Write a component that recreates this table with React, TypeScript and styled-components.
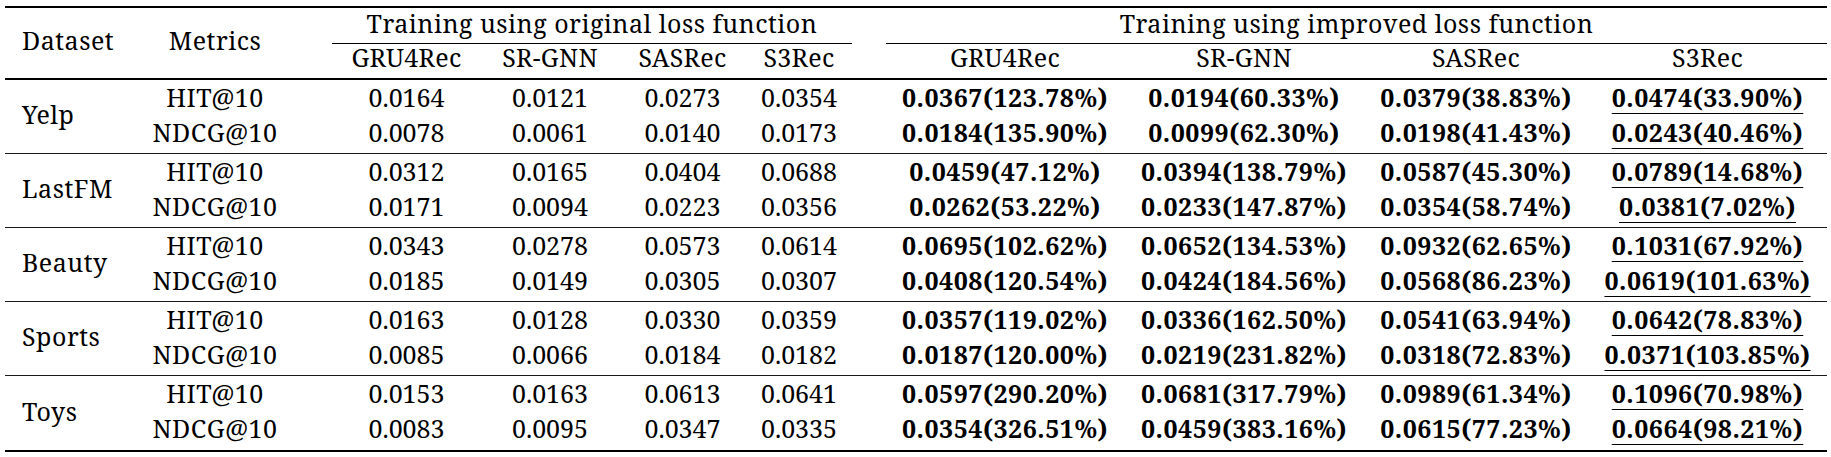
import React from 'react'
import styled, { createGlobalStyle } from 'styled-components'

const GlobalStyle = createGlobalStyle`
  html, body {
    margin: 0;
    padding: 0;
    background: #fff;
  }
  body {
    font-family: 'Noto Serif', 'Liberation Serif', serif;
    color: #000;
  }
`

const Table = styled.table`
  margin: 6px 0 0 5px;
  width: 1822px;
  table-layout: fixed;
  border-collapse: separate;
  border-spacing: 0;
  border-top: 2px solid #000;
  border-bottom: 2px solid #000;
  font-family: 'Noto Serif', 'Liberation Serif', serif;
  font-size: 25px;
  line-height: 27px;
  color: #000;
`

const Col = styled.col<{ $w: number }>`
  width: ${p => p.$w}px;
`

// header cells
const CornerHead = styled.th<{ $left?: boolean }>`
  font-weight: 400;
  letter-spacing: 0.5px;
  white-space: nowrap;
  vertical-align: middle;
  text-align: ${p => (p.$left ? 'left' : 'center')};
  padding: 0 0 5px ${p => (p.$left ? '17px' : '0')};
  border-bottom: 2px solid #000;
`

const GroupHead = styled.th`
  font-weight: 400;
  letter-spacing: 0.5px;
  white-space: nowrap;
  text-align: center;
  padding: 2px 0 6px;
  border-bottom: 1px solid #000;
`

const ModelHead = styled.th`
  font-weight: 400;
  letter-spacing: 0.3px;
  white-space: nowrap;
  text-align: center;
  padding: 0 0 7px;
  border-bottom: 2px solid #000;
`

const Gap = styled.td<{ $rule?: number }>`
  padding: 0;
  border-bottom: ${p => (p.$rule ? `${p.$rule}px solid #000` : 'none')};
`

// body cells
const DatasetCell = styled.td<{ $sep: boolean }>`
  letter-spacing: 0.5px;
  white-space: nowrap;
  vertical-align: middle;
  text-align: left;
  padding: 0 0 4px 17px;
  border-bottom: ${p => (p.$sep ? '1px solid #1a1a1a' : 'none')};
`

const BodyCell = styled.td<{ $second: boolean; $sep: boolean }>`
  white-space: nowrap;
  text-align: center;
  padding: ${p => (p.$second ? (p.$sep ? '2px 0 7px' : '2px 0 8px') : '3.5px 0 6.5px')};
  border-bottom: ${p => (p.$second && p.$sep ? '1px solid #1a1a1a' : 'none')};
`

const MetricText = styled.span`
  letter-spacing: 0.5px;
`

const Value = styled.span<{ $bold?: boolean }>`
  font-weight: ${p => (p.$bold ? 700 : 400)};
  letter-spacing: ${p => (p.$bold ? '0.5px' : '0')};
`

const Underlined = styled(Value)`
  text-decoration: underline;
  text-decoration-thickness: 1px;
  text-underline-offset: 6px;
  text-decoration-skip-ink: none;
`

type Row = { metric: string; base: string[]; improved: string[] }
type Group = { name: string; rows: Row[] }

const models = ['GRU4Rec', 'SR-GNN', 'SASRec', 'S3Rec']

const groups: Group[] = [
  {
    name: 'Yelp',
    rows: [
      { metric: 'HIT@10', base: ['0.0164', '0.0121', '0.0273', '0.0354'], improved: ['0.0367(123.78%)', '0.0194(60.33%)', '0.0379(38.83%)', '0.0474(33.90%)'] },
      { metric: 'NDCG@10', base: ['0.0078', '0.0061', '0.0140', '0.0173'], improved: ['0.0184(135.90%)', '0.0099(62.30%)', '0.0198(41.43%)', '0.0243(40.46%)'] },
    ],
  },
  {
    name: 'LastFM',
    rows: [
      { metric: 'HIT@10', base: ['0.0312', '0.0165', '0.0404', '0.0688'], improved: ['0.0459(47.12%)', '0.0394(138.79%)', '0.0587(45.30%)', '0.0789(14.68%)'] },
      { metric: 'NDCG@10', base: ['0.0171', '0.0094', '0.0223', '0.0356'], improved: ['0.0262(53.22%)', '0.0233(147.87%)', '0.0354(58.74%)', '0.0381(7.02%)'] },
    ],
  },
  {
    name: 'Beauty',
    rows: [
      { metric: 'HIT@10', base: ['0.0343', '0.0278', '0.0573', '0.0614'], improved: ['0.0695(102.62%)', '0.0652(134.53%)', '0.0932(62.65%)', '0.1031(67.92%)'] },
      { metric: 'NDCG@10', base: ['0.0185', '0.0149', '0.0305', '0.0307'], improved: ['0.0408(120.54%)', '0.0424(184.56%)', '0.0568(86.23%)', '0.0619(101.63%)'] },
    ],
  },
  {
    name: 'Sports',
    rows: [
      { metric: 'HIT@10', base: ['0.0163', '0.0128', '0.0330', '0.0359'], improved: ['0.0357(119.02%)', '0.0336(162.50%)', '0.0541(63.94%)', '0.0642(78.83%)'] },
      { metric: 'NDCG@10', base: ['0.0085', '0.0066', '0.0184', '0.0182'], improved: ['0.0187(120.00%)', '0.0219(231.82%)', '0.0318(72.83%)', '0.0371(103.85%)'] },
    ],
  },
  {
    name: 'Toys',
    rows: [
      { metric: 'HIT@10', base: ['0.0153', '0.0163', '0.0613', '0.0641'], improved: ['0.0597(290.20%)', '0.0681(317.79%)', '0.0989(61.34%)', '0.1096(70.98%)'] },
      { metric: 'NDCG@10', base: ['0.0083', '0.0095', '0.0347', '0.0335'], improved: ['0.0354(326.51%)', '0.0459(383.16%)', '0.0615(77.23%)', '0.0664(98.21%)'] },
    ],
  },
]

// dataset, metrics, gap, 4 original, gap, 4 improved
const widths = [125, 170, 32, 149, 138, 127, 106, 34, 238, 240, 224, 239]

export default function App() {
  return (
    <>
      <GlobalStyle />
      <Table>
        <colgroup>
          {widths.map((w, i) => (
            <Col key={i} $w={w} />
          ))}
        </colgroup>
        <thead>
          <tr>
            <CornerHead rowSpan={2} $left>Dataset</CornerHead>
            <CornerHead rowSpan={2}>Metrics</CornerHead>
            <Gap rowSpan={2} $rule={2} />
            <GroupHead colSpan={4}>Training using original loss function</GroupHead>
            <Gap rowSpan={2} $rule={2} />
            <GroupHead colSpan={4}>Training using improved loss function</GroupHead>
          </tr>
          <tr>
            {models.map(m => (
              <ModelHead key={'o' + m}>{m}</ModelHead>
            ))}
            {models.map(m => (
              <ModelHead key={'i' + m}>{m}</ModelHead>
            ))}
          </tr>
        </thead>
        <tbody>
          {groups.map((g, gi) => {
            const sep = gi < groups.length - 1
            return g.rows.map((r, ri) => {
              const second = ri === 1
              return (
                <tr key={g.name + r.metric}>
                  {ri === 0 && (
                    <DatasetCell rowSpan={2} $sep={sep}>{g.name}</DatasetCell>
                  )}
                  <BodyCell $second={second} $sep={sep}>
                    <MetricText>{r.metric}</MetricText>
                  </BodyCell>
                  <BodyCell $second={second} $sep={sep} />
                  {r.base.map((v, i) => (
                    <BodyCell key={'b' + i} $second={second} $sep={sep}>
                      <Value>{v}</Value>
                    </BodyCell>
                  ))}
                  <BodyCell $second={second} $sep={sep} />
                  {r.improved.map((v, i) => (
                    <BodyCell key={'m' + i} $second={second} $sep={sep}>
                      {i === 3 ? <Underlined $bold>{v}</Underlined> : <Value $bold>{v}</Value>}
                    </BodyCell>
                  ))}
                </tr>
              )
            })
          })}
        </tbody>
      </Table>
    </>
  )
}
